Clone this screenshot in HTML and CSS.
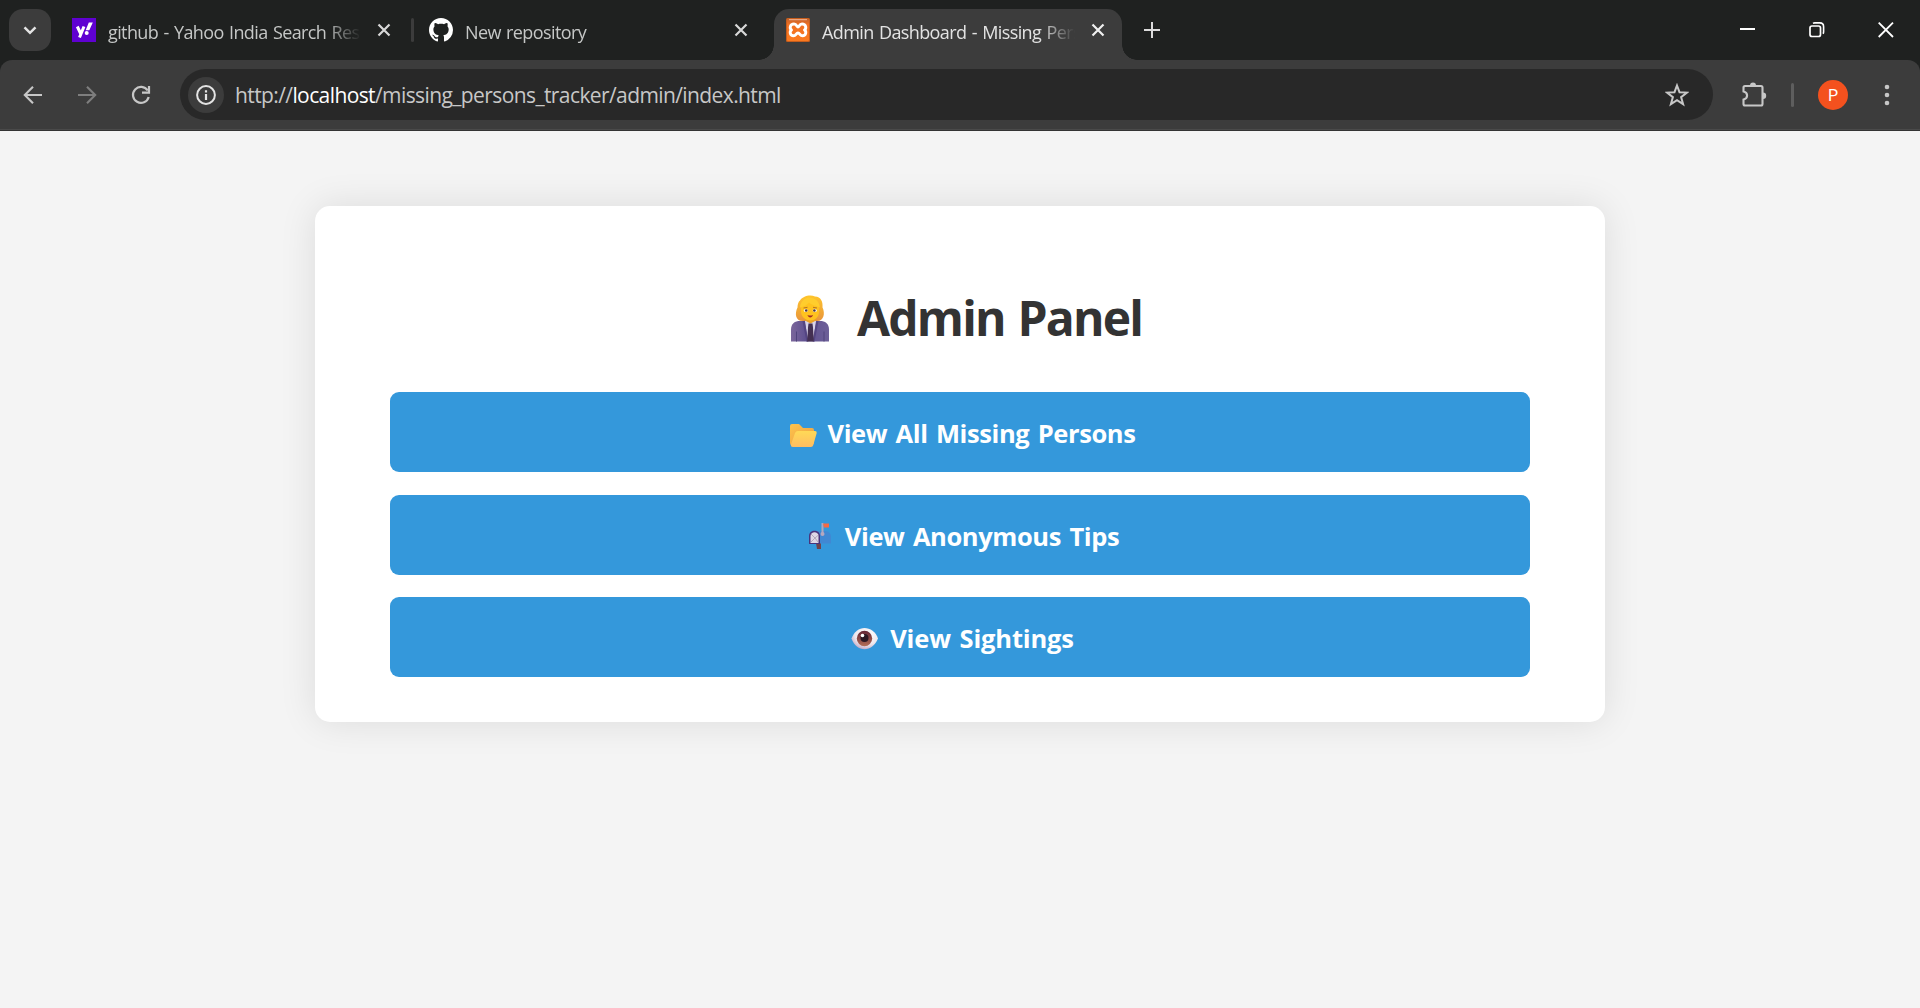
FILE: index.html
```
<!DOCTYPE html>
<html lang="en">
<head>
<meta charset="utf-8">
<title>Admin Dashboard - Missing Persons</title>
<link rel="stylesheet" href="styles.css">
</head>
<body>
<header class="browser">
  <div class="tabstrip">
    <button class="tab-search" aria-label="Search tabs"><svg width="42" height="42" viewBox="0 0 42 42"><path d="M15.500 18.300l5.500 5.500 5.500-5.500" fill="none" stroke="#e3e3e3" stroke-width="2.500"/></svg></button>
    <div class="tab tab-yahoo">
      <svg class="favicon" width="24" height="24" viewBox="0 0 24 24"><path fill="#5f01d1" d="M0 0h24v24H0z"/><path d="M5.300 8.500l3.300 7M12 8.500L7.500 19.500" stroke="#fff" stroke-width="3" fill="none"/><path d="M16.800 4.500h4l-3.500 7.800h-3.600z" fill="#fff"/><circle cx="14.700" cy="15" r="2" fill="#fff"/></svg>
      <span class="tab-title title-yahoo">github - Yahoo India Search Results</span>
      <svg class="close" width="14" height="14" viewBox="0 0 14 14"><path d="M1.500 1.500l11 11M12.500 1.500l-11 11"/></svg>
    </div>
    <span class="tab-divider"></span>
    <div class="tab tab-github">
      <svg class="favicon" width="24" height="24" viewBox="0 0 16 16"><path fill="#fff" d="M8 0C3.580 0 0 3.580 0 8c0 3.540 2.290 6.530 5.470 7.590.4.070.55-.17.55-.38 0-.19-.01-.82-.01-1.490-2.010.37-2.530-.49-2.690-.94-.09-.23-.48-.94-.82-1.130-.28-.15-.68-.52-.01-.53.63-.01 1.080.58 1.230.82.72 1.210 1.870.87 2.330.66.07-.52.28-.87.51-1.070-1.780-.2-3.640-.89-3.640-3.950 0-.87.31-1.590.82-2.150-.08-.2-.36-1.020.08-2.120 0 0 .67-.21 2.200.82.64-.18 1.320-.27 2-.27s1.360.09 2 .27c1.530-1.040 2.200-.82 2.200-.82.44 1.100.16 1.920.08 2.120.51.56.82 1.270.82 2.150 0 3.070-1.870 3.750-3.650 3.950.29.25.54.73.54 1.480 0 1.070-.01 1.930-.01 2.200 0 .21.15.46.55.38A8.010 8.010 0 0016 8c0-4.420-3.580-8-8-8z"/></svg>
      <span class="tab-title title-github">New repository</span>
      <svg class="close" width="14" height="14" viewBox="0 0 14 14"><path d="M1.500 1.500l11 11M12.500 1.500l-11 11"/></svg>
    </div>
    <div class="tab tab-active">
      <svg class="favicon" width="24" height="24" viewBox="0 0 24 24"><defs><linearGradient id="xo" x2="0" y2="1"><stop stop-color="#c4622c"/><stop offset=".25" stop-color="#f07022"/><stop offset="1" stop-color="#fb7a20"/></linearGradient></defs><rect width="24" height="24" rx="1.500" fill="#c65d1c"/><rect x="1" y="1" width="22" height="22" rx="1" fill="url(#xo)"/><path d="M3 1.700h18" stroke="#f2b795" stroke-width="1"/><path d="M8 6c2.800 0 2.800 3 4 3s1.200-3 4-3c4.200 0 4.600 4.600 2.500 6 2.100 1.400 1.700 5.800-2 5.800-2.500 0-2.500-2.800-4.500-2.800s-2 2.800-4.500 2.800c-3.700 0-4.100-4.400-2-5.800C3.400 10.600 3.800 6 8 6z" stroke="#fff" stroke-width="2.900" fill="none" stroke-linejoin="round"/></svg>
      <span class="tab-title title-active">Admin Dashboard - Missing Persons</span>
      <svg class="close" width="14" height="14" viewBox="0 0 14 14"><path d="M1.500 1.500l11 11M12.500 1.500l-11 11"/></svg>
    </div>
    <svg class="new-tab" width="16" height="16" viewBox="0 0 16 16"><path d="M8 0v16M0 8h16" stroke="#dcdcdc" stroke-width="2"/></svg>
    <div class="window-controls">
      <svg width="16" height="16" viewBox="0 0 16 16"><path d="M0 7h15" stroke="#fff" stroke-width="2"/></svg>
      <svg width="16" height="16" viewBox="0 0 16 16"><rect x="1" y="4" width="10.500" height="10.500" rx="2" fill="none" stroke="#fff" stroke-width="1.700"/><path d="M4 1.400c.6-.4 1-.5 1.800-.5h5c2.500 0 3.800 1.400 3.800 3.800v5c0 1-.2 1.500-.6 2" fill="none" stroke="#fff" stroke-width="1.600"/></svg>
      <svg width="16" height="16" viewBox="0 0 16 16"><path d="M.7.700l14.300 14.300M15 .7L.7 15" stroke="#fff" stroke-width="1.800"/></svg>
    </div>
  </div>
  <div class="toolbar">
    <svg class="nav" width="20" height="20" viewBox="0 0 20 20"><path d="M19 10H2.500M10 1.800L1.800 10l8.200 8.200" fill="none" stroke="#c7c7c7" stroke-width="2.100"/></svg>
    <svg class="nav" width="20" height="20" viewBox="0 0 20 20"><path d="M1 10h16.500M10 1.800l8.200 8.200-8.200 8.200" fill="none" stroke="#7e7e7e" stroke-width="2.100"/></svg>
    <svg class="nav" width="20" height="20" viewBox="0 0 20 20"><path d="M16.700 5.500A8 8 0 1 0 17.700 12" fill="none" stroke="#c7c7c7" stroke-width="2.200"/><path d="M18 1v6.700h-7" fill="none" stroke="#c7c7c7" stroke-width="2.200"/></svg>
    <div class="omnibox">
      <span class="site-info"><svg width="20" height="20" viewBox="0 0 20 20"><circle cx="10" cy="10" r="8.900" fill="none" stroke="#e3e3e3" stroke-width="2"/><path d="M10 9v6M10 5.200v2.200" stroke="#e3e3e3" stroke-width="2.200"/></svg></span>
      <span class="url">http://<span class="host">localhost</span>/missing_persons_tracker/admin/index.html</span>
      <svg class="star" width="24" height="24" viewBox="0 0 24 24"><path d="M12 2.500l2.500 6.700 7.500.4-5.900 4.500 2 7L12 17.100l-6.100 4 2-7L2 9.600l7.500-.4z" fill="none" stroke="#c7c7c7" stroke-width="2"/></svg>
    </div>
    <svg class="extensions" width="26" height="26" viewBox="0 0 26 26"><path d="M4 4h16q1.500 0 1.500 1.500v16.500q0 1.500-1.500 1.500H4q-1.500 0-1.500-1.500V17.500c4.800-1 4.800-7 0-8V5.500Q2.500 4 4 4z" fill="none" stroke="#c7c7c7" stroke-width="2.100"/><path d="M9 3.500a3 3 0 0 1 6 0zM22 10.500a3.200 3.200 0 0 1 0 6.400z" fill="#c7c7c7"/></svg>
    <span class="toolbar-divider"></span>
    <span class="avatar">P</span>
    <svg class="menu" width="6" height="22" viewBox="0 0 6 22"><g fill="#c7c7c7"><circle cx="3" cy="3" r="2.300"/><circle cx="3" cy="11" r="2.300"/><circle cx="3" cy="19" r="2.300"/></g></svg>
  </div>
</header>
<main class="page">
  <section class="panel">
    <h1 class="heading">
      <svg width="77" height="56" viewBox="0 2.500 77 56"><defs>
        <linearGradient id="hair" x2="0" y2="1"><stop stop-color="#ffc52c"/><stop offset="1" stop-color="#e8953c"/></linearGradient>
        <linearGradient id="suit" x2="1"><stop stop-color="#7b679b"/><stop offset=".4" stop-color="#5f5090"/><stop offset="1" stop-color="#6d6098"/></linearGradient></defs>
        <path d="M20 13c2-4 10-6.500 15-4 6 .5 8 5 7.500 11 3 6 1 13.500-5 13.500H22.500c-7 0-8-7.500-5-13.500 0-3 1-6 2.500-7z" fill="url(#hair)"/>
        <path d="M11 54V42c0-6 4-8.500 9-8.500h20c5 0 9 2.500 9 8.500v12z" fill="url(#suit)"/>
        <path d="M25 33.500h11l-3 20.500h-5z" fill="#d9d3e8"/><path d="M23.500 33.500l4 20.500M37.500 33.500l-4 20.500" stroke="#544582" stroke-width="2"/>
        <path d="M25 29h11v4l-5.500 3-5.500-3z" fill="#eba127"/>
        <path d="M21 20c1-3 4-5 6-6 4 2 9 2 12 4v6c0 6-4.500 9-8.500 9S21 30 21 24z" fill="#ffc21f"/>
        <path d="M20 20c5-1 7-3 9-5 3 3 7 3 11 5-1-8-7-10-12-10-4 1-8 5-8 10z" fill="#ffcd2d"/>
        <path d="M28.500 36h4l.5 4 .8 14h-6.600l.8-14z" fill="#443052"/>
        <path d="M16.500 44v10M44 44v10" stroke="#50447c" stroke-width="1"/>
        <path d="M23.500 20.500l4-.7M33 19.800l4 .7" stroke="#b57125" stroke-width="1"/>
        <ellipse cx="25.800" cy="23" rx="2" ry="1.600" fill="#fff"/><ellipse cx="34.800" cy="23" rx="2" ry="1.600" fill="#fff"/><circle cx="26.200" cy="23" r="1.300" fill="#4e343d"/><circle cx="34.400" cy="23" r="1.300" fill="#4e343d"/>
        <path d="M27.500 27.500c1.700.8 3.800.8 5.500 0-.7 3.200-4.800 3.200-5.500 0z" fill="#a42b25"/></svg><span>Admin Panel</span>
    </h1>
    <nav class="links">
      <a class="link"><svg width="43" height="40" viewBox="0 0 43 40"><defs><linearGradient id="fb" x2="1" y2="1"><stop stop-color="#ffc44c"/><stop offset="1" stop-color="#e99b42"/></linearGradient><linearGradient id="ff" x2="0" y2="1"><stop stop-color="#ffd956"/><stop offset="1" stop-color="#ffbd62"/></linearGradient></defs><path d="M5 14q0-2 2-2h7l4 4h9q2 0 2 2v14L7 34q-2-1-2-3z" fill="url(#fb)"/><path d="M13 19h17q2 0 1.700 2l-3.400 12q-.5 2-2.300 2H8q-2.500 0-2-2.500L10 21q.8-2 3-2z" fill="url(#ff)"/></svg><span class="t1">View All Missing Persons</span></a>
      <a class="link"><svg width="44" height="40" viewBox="0 0 44 40"><path d="M15 28h5v6h-4z" fill="#70434c"/><path d="M11 16h13c4 0 6 3 6 6v6.500H11z" fill="#4088d3"/><path d="M8 29v-8c0-7 11-7 11 0v8z" fill="#49347c"/><path d="M9.500 28v-7c0-5 8-5 8 0v7z" fill="#ded7e6"/><path d="M10 19l4 4 3.500-3M10 27l4-4 3 4" stroke="#a69caf" stroke-width=".8" fill="none"/><path d="M21.500 8v12" stroke="#b0a8bf" stroke-width="2"/><circle cx="21.500" cy="19" r="2" fill="#b6a8bf"/><path d="M22 8.500h6v4h-5z" fill="#f76943"/></svg><span class="t2">View Anonymous Tips</span></a>
      <a class="link"><svg width="44" height="40" viewBox="0 0 44 40"><defs><radialGradient id="ew" cx=".6" cy=".3" r=".8"><stop stop-color="#fff"/><stop offset=".6" stop-color="#eee7ed"/><stop offset="1" stop-color="#b294b8"/></radialGradient><linearGradient id="ei" x2="0" y2="1"><stop stop-color="#632536"/><stop offset="1" stop-color="#b36d57"/></linearGradient></defs><path d="M5.500 21.500C8 15 13 11 18.500 11S30 15 32 21.500C29 28.500 24 32.300 18.500 32.300S8 28.500 5.500 21.500z" fill="url(#ew)"/><circle cx="18.500" cy="21.500" r="7.700" fill="url(#ei)"/><circle cx="18.500" cy="21" r="4" fill="#2b1824"/><circle cx="16.500" cy="18.500" r="1.800" fill="#fff"/></svg><span class="t3">View Sightings</span></a>
    </nav>
  </section>
</main>
</body>
</html>
```
FILE: styles.css
```
* { box-sizing: border-box; }
body { margin: 0; height: 1008px; overflow: hidden; background: #f4f4f4; font-family: "Open Sans", "Noto Sans", sans-serif; display: flex; flex-direction: column; }
svg { display: block; flex: none; }
.browser { background: #1f2120; }
.tabstrip { height: 60px; display: flex; align-items: center; padding-left: 9px; }
.tab-search { width: 42px; height: 42px; padding: 0; border: 0; border-radius: 14px; background: #3c3c3c; flex: none; }
.tab { display: flex; align-items: center; flex: none; color: #c5c7c6; font-size: 18px; }
.tab-yahoo { margin-left: 21px; width: 319px; }
.tab-title { flex: none; margin: 3px auto 0 12px; line-height: 28px; overflow: hidden; white-space: nowrap; letter-spacing: -0.6px; word-spacing: 1.2px; -webkit-mask-image: linear-gradient(90deg, #000 calc(100% - 36px), transparent); mask-image: linear-gradient(90deg, #000 calc(100% - 36px), transparent); }
.title-yahoo { width: 253px; }
.title-github { width: 256px; }
.title-active { width: 253px; }
.close path { fill: none; stroke: #d8d8d8; stroke-width: 2.2; }
.tab-divider { width: 3px; height: 24px; margin: 0 15px 0 20px; background: #3c3c3c; border-radius: 2px; flex: none; }
.tab-github { width: 319px; }
.tab-active { position: relative; width: 348px; height: 51px; margin: 9px 0 0 26px; padding: 0 17px 9px 12px; border-radius: 15px 15px 0 0; background: #3c3c3c; color: #e3e3e3; }
.tab-active::before, .tab-active::after { content: ""; position: absolute; bottom: 0; width: 15px; height: 15px; }
.tab-active::before { right: 100%; background: radial-gradient(circle at 0 0, transparent 14.5px, #3c3c3c 15px); }
.tab-active::after { left: 100%; background: radial-gradient(circle at 100% 0, transparent 14.5px, #3c3c3c 15px); }
.tab-active .close path { stroke: #f0f0f0; }
.new-tab { margin-left: 22px; }
.window-controls { display: flex; gap: 53px; margin-left: auto; margin-right: 26px; }
.toolbar { height: 71px; background: #3c3c3c; border-radius: 12px 12px 0 0; border-bottom: 1px solid #343434; box-shadow: inset 0 -1px #4a4a4a; display: flex; align-items: center; padding: 0 0 1px 23px; }
.toolbar > .nav { margin-right: 34px; }
.omnibox { flex: none; width: 1533px; height: 51px; margin: 0 0 0 -5px; border-radius: 26px; background: #282828; display: flex; align-items: center; padding: 0 24px 0 8px; }
.site-info { width: 36px; height: 36px; border-radius: 50%; background: #3c3c3c; display: grid; place-items: center; flex: none; }
.url { margin-left: 11px; font-size: 21px; line-height: 30px; letter-spacing: -0.6px; color: #c7c7c7; white-space: nowrap; }
.host { color: #fff; }
.star { margin-left: auto; }
.extensions { margin-left: 28px; }
.toolbar-divider { width: 3px; height: 24px; margin-left: 24px; background: #5e5e5e; border-radius: 2px; }
.avatar { width: 30px; height: 30px; margin-left: 24px; border-radius: 50%; background: #f4511e; color: #fff; font: 16px/31px Roboto, sans-serif; text-align: center; }
.menu { margin-left: 36px; }
.page { flex: 1; padding-top: 75px; display: flex; flex-direction: column; align-items: center; }
.panel { width: 1290px; height: 516px; padding: 84px 75px 45px; border-radius: 15px; background: #fff; box-shadow: 0 0 37px rgba(0, 0, 0, .1); }
.heading { margin: 0 0 46px; height: 56px; display: flex; justify-content: center; align-items: center; color: #333; font-size: 48px; line-height: 56px; font-weight: 700; letter-spacing: -1.8px; word-spacing: 2px; white-space: nowrap; }
.heading svg { margin-left: 2px; }
.links { display: grid; gap: 22.5px; }
.link { height: 80px; border-radius: 9px; background: #3498db; color: #fff; font-size: 25.5px; font-weight: 700; display: flex; align-items: center; justify-content: center; white-space: nowrap; }
.t1, .t2, .t3 { letter-spacing: -0.4px; word-spacing: 2.2px; line-height: 36px; margin-top: 2px; }
.t3 { letter-spacing: -0.15px; }
```
